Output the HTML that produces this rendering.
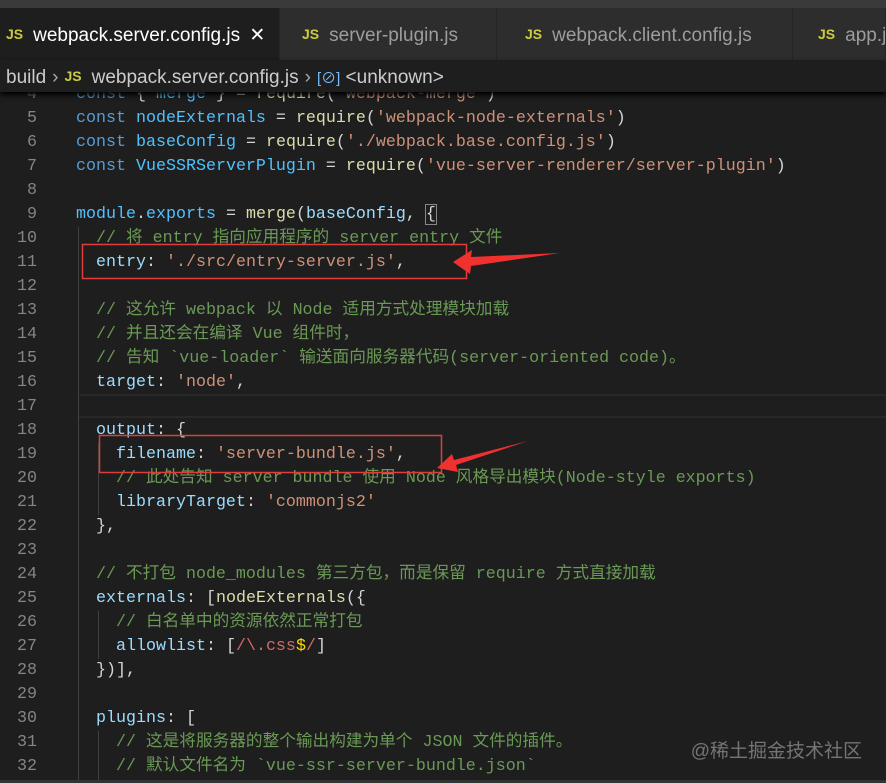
<!DOCTYPE html>
<html><head><meta charset="utf-8">
<style>
*{margin:0;padding:0;box-sizing:border-box}
body{width:886px;height:783px;overflow:hidden;background:#1e1e1e;position:relative;font-family:"Liberation Sans","Noto Sans CJK SC",sans-serif}
.top{position:absolute;left:0;top:0;width:886px;height:8px;background:#3a3a3a}
.tabs{position:absolute;left:0;top:8px;width:886px;height:52px;background:#252526}
.tab{position:absolute;top:0;height:52px;background:#2d2d2d;color:#9d9d9d;font-size:19px;line-height:52px;border-right:1px solid #252526;white-space:nowrap;overflow:hidden}
.tab.a{background:#1e1e1e;color:#fff}
.js{color:#cbcb41;font-weight:bold;font-size:14px;margin-right:10px;vertical-align:2px}
.bc{position:absolute;left:0;top:60px;width:886px;height:32px;background:#1e1e1e;color:#ccc;font-size:19px;line-height:32px;padding-left:6px;z-index:3;box-shadow:0 3px 5px #000}
.bc .sep{color:#aaa;margin:0 6px}
.code{position:absolute;left:0;top:83px;width:886px;font-family:"Liberation Mono","Noto Sans CJK SC",monospace;font-size:16.67px}
.l{height:24px;line-height:24px;position:relative}
.n{position:absolute;left:0;top:0;width:37px;text-align:right;color:#858585}
.t{position:absolute;left:76px;top:0;color:#d4d4d4;white-space:pre}
.k{color:#569cd6}.v{color:#4fc1ff}.p{color:#9cdcfe}.s{color:#ce9178}.c{color:#6a9955}.f{color:#dcdcaa}.r{color:#d16969}.y{color:#ffd700}
.g{position:absolute;width:1px;background:#404040}
.wm{position:absolute;right:24px;top:736px;color:#8a8a8a;font-size:19px;opacity:.8;z-index:5}
</style></head><body>
<div class="top"></div>
<div class="tabs">
<div class="tab a" style="left:0;width:280px;padding-left:6px"><span class="js">JS</span>webpack.server.config.js <span style="margin-left:4px">✕</span></div>
<div class="tab" style="left:280px;width:217px;padding-left:22px"><span class="js">JS</span>server-plugin.js</div>
<div class="tab" style="left:497px;width:296px;padding-left:28px"><span class="js">JS</span>webpack.client.config.js</div>
<div class="tab" style="left:793px;width:93px;padding-left:25px"><span class="js">JS</span>app.js</div>
</div>
<div class="bc">build<span class="sep">›</span><span class="js">JS</span>webpack.server.config.js<span class="sep">›</span><span style="color:#75beff;font-size:15px">[⊘]</span> &lt;unknown&gt;</div>
<div style="position:absolute;left:78px;top:394px;width:808px;height:24px;border-top:2px solid #282828;border-bottom:2px solid #282828"></div>
<div class="g" style="left:78px;top:227px;height:556px"></div>
<div class="g" style="left:98px;top:443px;height:72px"></div>
<div class="g" style="left:98px;top:611px;height:48px"></div>
<div class="g" style="left:98px;top:731px;height:52px"></div>
<div class="code">
<div class="l"><span class="n">4</span><span class="t"><span class="k">const</span> { <span class="v">merge</span> } = <span class="f">require</span>(<span class="s">'webpack-merge'</span>)</span></div>
<div class="l"><span class="n">5</span><span class="t"><span class="k">const</span> <span class="v">nodeExternals</span> = <span class="f">require</span>(<span class="s">'webpack-node-externals'</span>)</span></div>
<div class="l"><span class="n">6</span><span class="t"><span class="k">const</span> <span class="v">baseConfig</span> = <span class="f">require</span>(<span class="s">'./webpack.base.config.js'</span>)</span></div>
<div class="l"><span class="n">7</span><span class="t"><span class="k">const</span> <span class="v">VueSSRServerPlugin</span> = <span class="f">require</span>(<span class="s">'vue-server-renderer/server-plugin'</span>)</span></div>
<div class="l"><span class="n">8</span></div>
<div class="l"><span class="n">9</span><span class="t"><span class="v">module</span>.<span class="v">exports</span> = <span class="f">merge</span>(<span class="p">baseConfig</span>, <span style="outline:1px solid #888">{</span></span></div>
<div class="l"><span class="n">10</span><span class="t">  <span class="c">// 将 entry 指向应用程序的 server entry 文件</span></span></div>
<div class="l"><span class="n">11</span><span class="t">  <span class="p">entry</span>: <span class="s">'./src/entry-server.js'</span>,</span></div>
<div class="l"><span class="n">12</span></div>
<div class="l"><span class="n">13</span><span class="t">  <span class="c">// 这允许 webpack 以 Node 适用方式处理模块加载</span></span></div>
<div class="l"><span class="n">14</span><span class="t">  <span class="c">// 并且还会在编译 Vue 组件时，</span></span></div>
<div class="l"><span class="n">15</span><span class="t">  <span class="c">// 告知 `vue-loader` 输送面向服务器代码(server-oriented code)。</span></span></div>
<div class="l"><span class="n">16</span><span class="t">  <span class="p">target</span>: <span class="s">'node'</span>,</span></div>
<div class="l"><span class="n">17</span></div>
<div class="l"><span class="n">18</span><span class="t">  <span class="p">output</span>: {</span></div>
<div class="l"><span class="n">19</span><span class="t">    <span class="p">filename</span>: <span class="s">'server-bundle.js'</span>,</span></div>
<div class="l"><span class="n">20</span><span class="t">    <span class="c">// 此处告知 server bundle 使用 Node 风格导出模块(Node-style exports)</span></span></div>
<div class="l"><span class="n">21</span><span class="t">    <span class="p">libraryTarget</span>: <span class="s">'commonjs2'</span></span></div>
<div class="l"><span class="n">22</span><span class="t">  },</span></div>
<div class="l"><span class="n">23</span></div>
<div class="l"><span class="n">24</span><span class="t">  <span class="c">// 不打包 node_modules 第三方包，而是保留 require 方式直接加载</span></span></div>
<div class="l"><span class="n">25</span><span class="t">  <span class="p">externals</span>: [<span class="f">nodeExternals</span>({</span></div>
<div class="l"><span class="n">26</span><span class="t">    <span class="c">// 白名单中的资源依然正常打包</span></span></div>
<div class="l"><span class="n">27</span><span class="t">    <span class="p">allowlist</span>: [<span class="r">/\.css</span><span class="y">$</span><span class="r">/</span>]</span></div>
<div class="l"><span class="n">28</span><span class="t">  })],</span></div>
<div class="l"><span class="n">29</span></div>
<div class="l"><span class="n">30</span><span class="t">  <span class="p">plugins</span>: [</span></div>
<div class="l"><span class="n">31</span><span class="t">    <span class="c">// 这是将服务器的整个输出构建为单个 JSON 文件的插件。</span></span></div>
<div class="l"><span class="n">32</span><span class="t">    <span class="c">// 默认文件名为 `vue-ssr-server-bundle.json`</span></span></div>
</div>
<svg style="position:absolute;left:0;top:0;z-index:4" width="886" height="783">
<rect x="82.5" y="244.5" width="384" height="34" fill="none" stroke="#e03c3c" stroke-width="1.5"/>
<rect x="99.5" y="435.5" width="342" height="37" fill="none" stroke="#e03c3c" stroke-width="1.5"/>
<polygon points="453,262 472,250 471,257 560,253 471,266 470,274" fill="#f0312f"/>
<polygon points="437,468 452,454 454,460 528,441 456,465 458,472" fill="#f0312f"/>
</svg>
<div class="wm">@稀土掘金技术社区</div>
<div style="position:absolute;left:0;top:780px;width:886px;height:3px;background:#333"></div>
</body></html>
